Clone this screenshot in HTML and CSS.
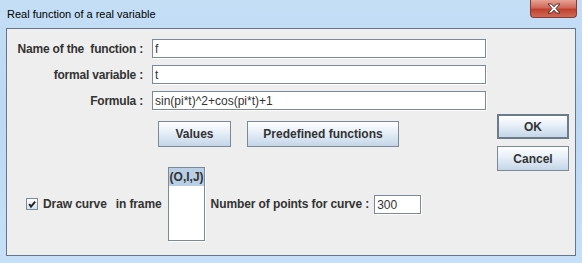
FILE: index.html
```html
<!DOCTYPE html>
<html lang="en">
<head>
    <meta charset="UTF-8">
    <title>Real function of a real variable</title>
    <link rel="stylesheet" href="styles.css">
</head>
<body>
    <div class="window">
        <div class="titlebar">
            <span class="title">Real function of a real variable</span>
            <div class="close">
                <svg width="16" height="11" viewBox="0 0 16 11">
                    <path d="M2 1 L5.5 1 L8 3.8 L10.5 1 L14 1 L10 5.5 L14 10 L10.5 10 L8 7.2 L5.5 10 L2 10 L6 5.5 Z" fill="#fff" stroke="#5a2a24" stroke-width="1" stroke-linejoin="round"/>
                </svg>
            </div>
        </div>

        <div class="panel">
            <div class="main">
                <div class="fields">
                    <label>Name of the&nbsp; function :</label>
                    <div class="field">f</div>
                    <label>formal variable :</label>
                    <div class="field">t</div>
                    <label>Formula :</label>
                    <div class="field">sin(pi*t)^2+cos(pi*t)+1</div>
                </div>

                <div class="actions">
                    <div class="btn btn-values">Values</div>
                    <div class="btn btn-predef">Predefined functions</div>
                </div>

                <div class="curve-row">
                    <span class="check">
                        <svg width="10" height="10" viewBox="0 0 10 10">
                            <path d="M2.2 5 L4 7.6 L8.2 2.6" fill="none" stroke="#222" stroke-width="1.9"/>
                        </svg>
                    </span>
                    <span class="lbl draw">Draw curve</span>
                    <span class="lbl">in frame</span>
                    <div class="list">
                        <div class="list-item selected">(O,I,J)</div>
                    </div>
                    <span class="lbl">Number of points for curve :</span>
                    <div class="field points">300</div>
                </div>
            </div>

            <div class="side">
                <div class="btn btn-default">OK</div>
                <div class="btn">Cancel</div>
            </div>
        </div>
    </div>
</body>
</html>
```

FILE: styles.css
```css
body {
    margin: 0;
    font-family: 'Liberation Sans', Arial, sans-serif;
    font-size: 12px;
    color: #333;
}
.window {
    width: 582px;
    height: 263px;
    box-sizing: border-box;
    padding: 0 6px 7px 6px;
    background: linear-gradient(180deg, #c4def6 0%, #bcd8f3 40%, #c6e0f8 100%);
    display: flex;
    flex-direction: column;
}
.titlebar {
    height: 28px;
    display: flex;
    justify-content: space-between;
    align-items: flex-start;
}
.title {
    font-size: 11px;
    color: #000;
    margin: 8px 0 0 1px;
}
.close {
    width: 47px;
    height: 18px;
    margin-right: -1px;
    box-sizing: border-box;
    border: 1px solid #8a3a30;
    border-top: none;
    border-radius: 0 0 4px 4px;
    background: linear-gradient(180deg, #e6a394 0%, #d0685a 45%, #c0402f 55%, #cf6a56 100%);
    display: flex;
    align-items: center;
    justify-content: center;
}
.panel {
    flex: 1;
    display: flex;
    background: #eeeeee;
    border: 1px solid #66768a;
}
.main {
    flex: 0 0 490px;
    padding-top: 10px;
}
.fields {
    display: grid;
    grid-template-columns: 136px 334px;
    column-gap: 9px;
    row-gap: 7px;
    align-items: center;
}
.fields label {
    font-weight: bold;
    letter-spacing: -0.2px;
    text-align: right;
}
.field {
    height: 19px;
    box-sizing: border-box;
    background: #fff;
    border: 1px solid #7a8a99;
    box-shadow: 1px 1px 0 #fff;
    padding: 2px 2px 0 2px;
    line-height: 14px;
}
.actions {
    display: flex;
    gap: 16px;
    margin: 11px 0 0 151px;
}
.btn {
    height: 26px;
    box-sizing: border-box;
    border: 1px solid #7a8a99;
    background: linear-gradient(180deg, #ffffff 0%, #e6eef7 45%, #c5d6e8 100%);
    font-weight: bold;
    display: flex;
    align-items: center;
    justify-content: center;
}
.btn-values {
    width: 73px;
}
.btn-predef {
    width: 152px;
}
.curve-row {
    display: flex;
    align-items: center;
    margin: 20px 0 0 19px;
}
.check {
    width: 12px;
    height: 12px;
    box-sizing: border-box;
    border: 1px solid #7a8a99;
    background: linear-gradient(180deg, #ffffff, #d4e0ec);
    display: flex;
    align-items: center;
    justify-content: center;
    margin-right: 5px;
}
.lbl {
    font-weight: bold;
    letter-spacing: -0.1px;
}
.draw {
    margin-right: 9px;
}
.list {
    width: 37px;
    height: 74px;
    box-sizing: border-box;
    margin: 0 6px;
    background: #fff;
    border: 1px solid #7a8a99;
    box-shadow: 1px 1px 0 #fff;
}
.list-item {
    font-weight: bold;
    padding: 2px 1px;
}
.list-item.selected {
    background: #b8cfe5;
}
.points {
    width: 47px;
    margin-left: 5px;
}
.side {
    width: 72px;
    padding-top: 85px;
    display: flex;
    flex-direction: column;
    gap: 7px;
}
.side .btn {
    height: 25px;
}
.btn-default {
    border: 2px solid #6b7b8b;
}
```
